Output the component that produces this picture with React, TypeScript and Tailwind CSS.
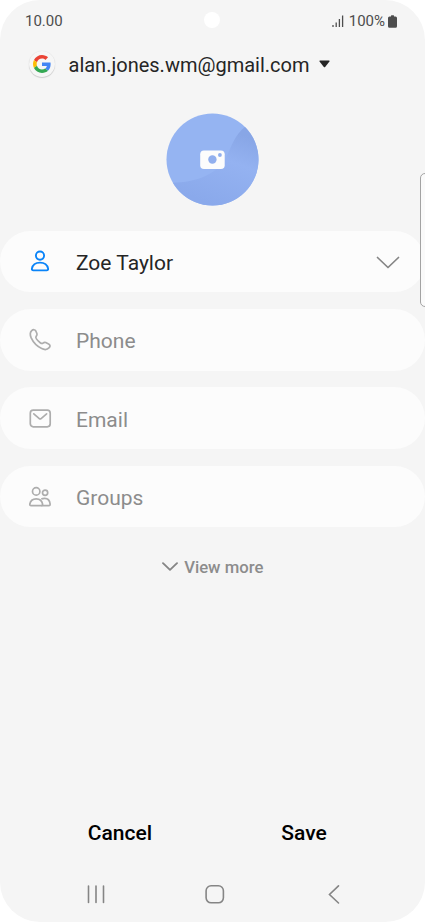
import type { ReactNode } from "react";

const ICON = "h-6 w-6 shrink-0 fill-none";

function GoogleLogo() {
  return (
    <span className="mb-px flex h-[26px] w-[26px] items-center justify-center rounded-full bg-[#f6f6f6] shadow-[0_1px_1px_rgba(0,0,0,0.15),0_0_1px_rgba(0,0,0,0.12)]">
      <svg viewBox="0 0 48 48" className="h-[18px] w-[18px]">
        <path fill="#EA4335" d="M24 9.5c3.54 0 6.71 1.22 9.21 3.6l6.85-6.85C35.9 2.38 30.47 0 24 0 14.62 0 6.51 5.38 2.56 13.22l7.98 6.19C12.43 13.72 17.74 9.5 24 9.5z" />
        <path fill="#4285F4" d="M46.98 24.55c0-1.57-.15-3.09-.38-4.55H24v9.02h12.94c-.58 2.96-2.26 5.48-4.78 7.18l7.73 6c4.51-4.18 7.09-10.36 7.09-17.65z" />
        <path fill="#FBBC05" d="M10.53 28.59A14.5 14.5 0 0 1 9.77 24c0-1.6.27-3.14.76-4.59l-7.98-6.19A23.9 23.9 0 0 0 0 24c0 3.88.92 7.54 2.56 10.78l7.97-6.19z" />
        <path fill="#34A853" d="M24 48c6.48 0 11.93-2.13 15.89-5.81l-7.73-6c-2.15 1.45-4.92 2.3-8.16 2.3-6.26 0-11.57-4.22-13.47-9.91l-7.98 6.19C6.51 42.62 14.62 48 24 48z" />
      </svg>
    </span>
  );
}

function PersonIcon() {
  return (
    <svg viewBox="0 0 24 24" className={`${ICON} stroke-[#0a84f8]`} strokeWidth="1.9">
      <circle cx="12" cy="5.6" r="4.1" />
      <path d="M5.400 20.400c-1.100 0-1.700-.6-1.500-1.800.7-3.600 3.900-6 8.100-6s7.400 2.400 8.100 6c.2 1.200-.4 1.800-1.500 1.800z" />
    </svg>
  );
}

function PhoneIcon() {
  return (
    <svg viewBox="0 0 24 24" className={`${ICON} stroke-[#adadad]`} strokeWidth="1.700" strokeLinejoin="round">
      <path d="M3.700 2.700C5.200 1.300 7 1.400 7.800 3l1.100 2.500c.4 1.100.1 1.800-.6 2.600-.9 1-.7 1.600.1 2.800 1 1.500 2.300 2.700 3.800 3.800 1.200.9 1.900 1.200 2.800.4.900-.8 1.600-1.100 2.700-.6l2.900 1.500c1.600.9 1.900 2.300.6 3.700-1.900 2-4.800 2.200-7.500.9C9.200 18.400 5.500 14.800 3.200 9.900 2 7.100 1.800 4.500 3.700 2.700z" />
    </svg>
  );
}

function MailIcon() {
  return (
    <svg viewBox="0 0 24 24" className={`${ICON} stroke-[#adadad]`} strokeWidth="1.700" strokeLinecap="round" strokeLinejoin="round">
      <rect x="2.300" y="3.200" width="19.900" height="16.600" rx="3" />
      <path d="M5.800 6.900l5.500 4.700c.6.500 1.200.5 1.800 0l5.500-4.700" />
    </svg>
  );
}

function GroupIcon() {
  return (
    <svg viewBox="0 0 24 24" className={`${ICON} stroke-[#adadad]`} strokeWidth="1.700">
      <circle cx="8.200" cy="6.400" r="3.700" />
      <circle cx="17.100" cy="7.800" r="2.600" />
      <path d="M3.100 20.700c-1 0-1.400-.6-1.300-1.500.5-3.300 3-5.400 6.400-5.400s5.900 2.100 6.400 5.400c.1.900-.3 1.500-1.300 1.500z" />
      <path d="M13.300 14.100c1.100-.6 2.200-.8 3.400-.8 2.900 0 5 2 5.400 5.500.1 1.300-.3 1.900-1.300 1.900h-7.500" />
    </svg>
  );
}

function Chevron({ className }: { className: string }) {
  return (
    <svg viewBox="0 0 24 13" className={`fill-none stroke-[#858585] ${className}`} strokeLinecap="round" strokeLinejoin="round">
      <path d="M1.500 1.500L12 11.500l10.500-10" />
    </svg>
  );
}

type FieldProps = { icon: ReactNode; label: string; filled?: boolean; children?: ReactNode };

function Field({ icon, label, filled, children }: FieldProps) {
  return (
    <div className="flex h-[61.600px] items-center rounded-full bg-[#fcfcfc] pt-px pr-[25.500px] pl-7">
      {icon}
      <span className={`ml-6 flex-1 pt-0.5 text-[21px] leading-6 ${filled ? "text-[#252525]" : "text-[#8c8c8c]"}`}>
        {label}
      </span>
      {children}
    </div>
  );
}

function StatusBar() {
  return (
    <div className="grid h-[42px] grid-cols-3 items-center px-[25px] text-[15px] text-[#4d4d4d]">
      <span>10.00</span>
      <span className="mr-px mb-0.5 h-4 w-4 justify-self-center rounded-full bg-white" />
      <span className="flex items-center justify-end pr-[3px]">
        <svg viewBox="0 0 12 12" className="mr-[5px] h-3 w-3 stroke-[#4d4d4d]" strokeWidth="1.300">
          <path d="M1 12V10M4.200 12V7.500M7.400 12V4M10.600 12V0.500" />
        </svg>
        100%
        <svg viewBox="0 0 9 13" className="ml-[3px] h-[13px] w-[9px] fill-[#4d4d4d]">
          <path d="M3 1.500V.8Q3 .3 3.500.3h2q.5 0 .5.500v.7h1.500Q9 1.500 9 3v8.200Q9 12.700 7.500 12.700h-6Q0 12.700 0 11.200V3q0-1.500 1.500-1.500z" />
        </svg>
      </span>
    </div>
  );
}

function PhotoPicker() {
  return (
    <svg viewBox="0 0 93 93" className="mx-auto mt-[26px] h-[93px] w-[93px] shrink-0">
      <defs>
        <clipPath id="photo">
          <circle cx="46.500" cy="46.500" r="46" />
        </clipPath>
        <linearGradient id="ridge" gradientUnits="userSpaceOnUse" x1="80" y1="14" x2="52" y2="93">
          <stop offset="0.100" stopColor="#88a6e6" />
          <stop offset="0.450" stopColor="#94b2f1" />
          <stop offset="1" stopColor="#8aa9eb" />
        </linearGradient>
      </defs>
      <g clipPath="url(#photo)">
        <rect width="93" height="93" fill="#95b4f2" />
        <path d="M0 69.500C28 71 50 62 60 45c5-10 8-23 20-32h13v80H0z" fill="url(#ridge)" />
      </g>
      <rect x="34.200" y="37.500" width="24.500" height="18.500" rx="3.800" fill="#fcfcfc" />
      <circle cx="46.400" cy="46.500" r="4.200" fill="#91afee" />
      <circle cx="53.900" cy="42" r="1.900" fill="#91afee" />
    </svg>
  );
}

export default function App() {
  return (
    <div className="h-[922px] w-[425px] overflow-hidden bg-white font-[Roboto,sans-serif]">
      <div className="relative flex h-full flex-col overflow-hidden rounded-[40px] bg-[#f5f5f5]">
        <StatusBar />

        <div className="flex h-[45px] items-center pl-[29px]">
          <GoogleLogo />
          <span className="ml-[13.500px] text-[20px] leading-6 text-[#252525]">alan.jones.wm@gmail.com</span>
          <svg viewBox="0 0 12 8" className="mb-0.5 ml-2.5 h-2 w-[11px] fill-[#252525]">
            <path d="M1 .3h10q1.100 0 .4.900L6.700 7.200q-.7.800-1.400 0L.6 1.200Q-.1.300 1 .3z" />
          </svg>
        </div>

        <PhotoPicker />

        <div className="mt-[24.800px] flex flex-col gap-[16.700px]">
          <Field icon={<PersonIcon />} label="Zoe Taylor" filled>
            <Chevron className="h-[13px] w-6 stroke-[1.700]" />
          </Field>
          <Field icon={<PhoneIcon />} label="Phone" />
          <Field icon={<MailIcon />} label="Email" />
          <Field icon={<GroupIcon />} label="Groups" />
        </div>

        <button className="mx-auto mt-[28px] flex h-6 items-center gap-[6.500px] text-[16.700px] font-medium text-[#8c8c8c]">
          <Chevron className="mb-0.5 h-[9px] w-[16px] stroke-[2.800]" />
          View more
        </button>

        <div className="mt-auto flex h-12 items-center text-[21px] font-medium text-black">
          <button className="ml-7 w-[184px]">Cancel</button>
          <button className="w-[184px]">Save</button>
        </div>

        <div className="flex h-16 items-center pt-2 pl-[84px]">
          <svg viewBox="0 0 24 24" className={`${ICON} stroke-[#858585]`} strokeWidth="1.600" strokeLinecap="round">
            <path d="M4.500 4v16.500M12 4v16.500M19.500 4v16.500" />
          </svg>
          <svg viewBox="0 0 24 24" className={`ml-[95px] ${ICON} stroke-[#858585]`} strokeWidth="1.600">
            <rect x="3.100" y="3.800" width="17.300" height="17" rx="5" />
          </svg>
          <svg viewBox="0 0 24 24" className={`ml-[95px] ${ICON} stroke-[#858585]`} strokeWidth="1.600" strokeLinecap="round">
            <path d="M16.500 3.800L7.500 12.500l9 8.500" />
          </svg>
        </div>

        {/* edge panel handle */}
        <div className="absolute top-[173px] -right-1 h-[134px] w-[9px] rounded-l-[5px] border border-[#a3a3a3] bg-[#fafafa]" />
      </div>
    </div>
  );
}
